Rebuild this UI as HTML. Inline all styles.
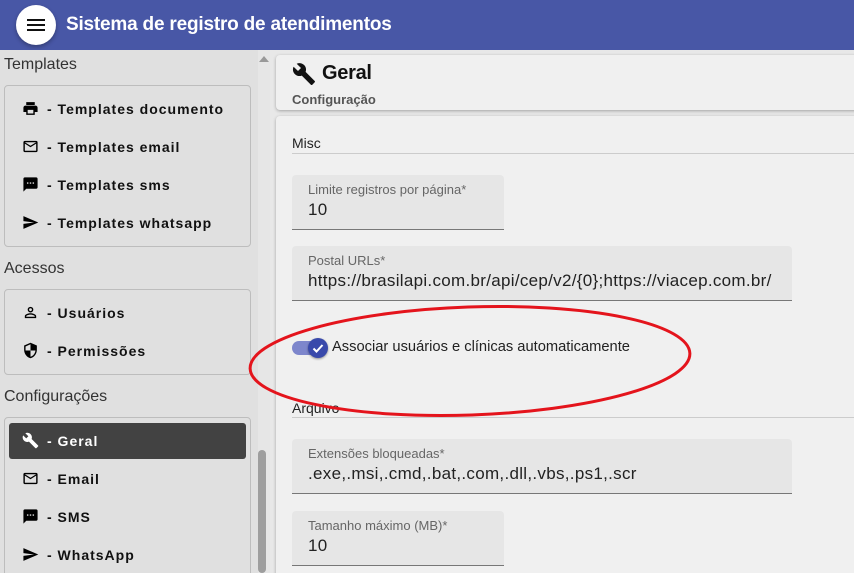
<!DOCTYPE html>
<html style="width:854px;height:573px;overflow:hidden"><head><style>
*{margin:0;padding:0;box-sizing:border-box}
body{width:854px;height:573px;overflow:hidden;background:#e8e8e8;font-family:"Liberation Sans",sans-serif;position:relative}
.hdr{position:absolute;left:0;top:0;width:854px;height:50px;background:#4857a6}
.menu{position:absolute;left:16px;top:5px;width:40px;height:40px;border-radius:50%;background:#fff;box-shadow:0 2px 4px rgba(0,0,0,.3)}
.menu i{position:absolute;left:11px;width:18px;height:2px;background:#111}
.title{position:absolute;left:66px;top:14px;color:#fff;font-size:19px;font-weight:bold;letter-spacing:-0.2px}
.side{position:absolute;left:0;top:50px;width:258px;height:523px;background:#e0e0e0}
.sb{position:absolute;left:258px;top:50px;width:12px;height:523px;background:#e6e6e6}
.thumb{position:absolute;left:258px;top:450px;width:8px;height:123px;background:#9e9e9e;border-radius:4px}
.sec{position:absolute;left:4px;font-size:16px;color:#333}
.box{position:absolute;left:4px;width:247px;border:1px solid #bdbdbd;border-radius:4px;background:#e0e0e0}
.it{position:absolute;left:22px;font-size:14px;font-weight:bold;letter-spacing:1px;color:#111;display:flex;align-items:center}
.it svg{width:17px;height:17px;margin-right:8px}
.act{position:absolute;left:9px;top:423px;width:237px;height:36px;background:#424242;border-radius:3px}
.card{position:absolute;left:276px;background:#f0f0f0;border-radius:4px;box-shadow:0 1px 3px rgba(0,0,0,.3)}
.fld{position:absolute;background:#e6e6e6;border-bottom:1px solid #777;border-radius:4px 4px 0 0}
.fld .l{position:absolute;left:16px;top:7px;font-size:13px;color:#666}
.fld .v{position:absolute;left:16px;top:25px;font-size:17px;letter-spacing:0.3px;color:#222}
</style></head><body>
<div class="hdr"><div class="menu"><i style="top:14px"></i><i style="top:19px"></i><i style="top:24px"></i></div><div class="title">Sistema de registro de atendimentos</div></div>
<div class="side"></div><div class="sb"></div><div class="thumb"></div>
<div style="position:absolute;left:259px;top:56px;width:0;height:0;border-left:5px solid transparent;border-right:5px solid transparent;border-bottom:6px solid #999"></div>
<div class="sec" style="top:56px">Templates</div>
<div class="box" style="top:85px;height:162px"></div>
<div class="it" style="top:100px"><svg viewBox="0 0 24 24"><path d="M19 8H5c-1.7 0-3 1.3-3 3v6h4v4h12v-4h4v-6c0-1.7-1.3-3-3-3zm-3 11H8v-5h8v5zM18 3H6v4h12z"/></svg>- Templates documento</div>
<div class="it" style="top:138px"><svg viewBox="0 0 24 24"><path d="M20 4H4c-1.1 0-2 .9-2 2v12c0 1.1.9 2 2 2h16c1.1 0 2-.9 2-2V6c0-1.1-.9-2-2-2zm0 14H4V8l8 5 8-5v10zm-8-7L4 6h16l-8 5z"/></svg>- Templates email</div>
<div class="it" style="top:176px"><svg viewBox="0 0 24 24"><path d="M20 2H4c-1.1 0-2 .9-2 2v18l4-4h14c1.1 0 2-.9 2-2V4c0-1.1-.9-2-2-2zM9 11H7V9h2v2zm4 0h-2V9h2v2zm4 0h-2V9h2v2z"/></svg>- Templates sms</div>
<div class="it" style="top:214px"><svg viewBox="0 0 24 24"><path d="M2 21l21-9L2 3v7l15 2-15 2z"/></svg>- Templates whatsapp</div>
<div class="sec" style="top:260px">Acessos</div>
<div class="box" style="top:289px;height:86px"></div>
<div class="it" style="top:304px"><svg viewBox="0 0 24 24"><path d="M12 6a2 2 0 1 1 0 4 2 2 0 0 1 0-4m0 9c2.7 0 5.8 1.3 6 2v1H6v-1c.2-.7 3.3-2 6-2m0-11a4 4 0 1 0 0 8 4 4 0 0 0 0-8zm0 9c-2.7 0-8 1.3-8 4v3h16v-3c0-2.7-5.3-4-8-4z"/></svg>- Usuários</div>
<div class="it" style="top:342px"><svg viewBox="0 0 24 24"><path d="M12 1L3 5v6c0 5.6 3.8 10.7 9 12 5.2-1.3 9-6.4 9-12V5l-9-4zm0 11h7c-.5 4.1-3.3 7.8-7 8.9V12H5V6.3l7-3.1V12z"/></svg>- Permissões</div>
<div class="sec" style="top:388px">Configurações</div>
<div class="box" style="top:417px;height:160px"></div>
<div class="act"></div>
<div class="it" style="top:432px;color:#fff"><svg viewBox="0 0 24 24" fill="#fff"><path d="M22.7 19l-9.1-9.1c.9-2.3.4-5-1.5-6.9-2-2-5-2.4-7.4-1.3L9 6 6 9 1.6 4.7C.4 7.1.9 10.1 2.9 12.1c1.9 1.9 4.6 2.4 6.9 1.5l9.1 9.1c.4.4 1 .4 1.4 0l2.3-2.3c.5-.4.5-1.1.1-1.4z"/></svg>- Geral</div>
<div class="it" style="top:470px"><svg viewBox="0 0 24 24"><path d="M20 4H4c-1.1 0-2 .9-2 2v12c0 1.1.9 2 2 2h16c1.1 0 2-.9 2-2V6c0-1.1-.9-2-2-2zm0 14H4V8l8 5 8-5v10zm-8-7L4 6h16l-8 5z"/></svg>- Email</div>
<div class="it" style="top:508px"><svg viewBox="0 0 24 24"><path d="M20 2H4c-1.1 0-2 .9-2 2v18l4-4h14c1.1 0 2-.9 2-2V4c0-1.1-.9-2-2-2zM9 11H7V9h2v2zm4 0h-2V9h2v2zm4 0h-2V9h2v2z"/></svg>- SMS</div>
<div class="it" style="top:546px"><svg viewBox="0 0 24 24"><path d="M2 21l21-9L2 3v7l15 2-15 2z"/></svg>- WhatsApp</div>

<div class="card" style="top:55px;width:590px;height:55px">
<svg style="position:absolute;left:16px;top:7px" width="24" height="24" viewBox="0 0 24 24"><path fill="#111" d="M22.7 19l-9.1-9.1c.9-2.3.4-5-1.5-6.9-2-2-5-2.4-7.4-1.3L9 6 6 9 1.6 4.7C.4 7.1.9 10.1 2.9 12.1c1.9 1.9 4.6 2.4 6.9 1.5l9.1 9.1c.4.4 1 .4 1.4 0l2.3-2.3c.5-.4.5-1.1.1-1.4z"/></svg>
<div style="position:absolute;left:46px;top:7px;font-size:20px;color:#111;font-weight:bold;letter-spacing:-0.3px">Geral</div>
<div style="position:absolute;left:16px;top:37px;font-size:13px;color:#555;font-weight:bold">Configuração</div>
</div>
<div class="card" style="top:116px;width:590px;height:470px">
<div style="position:absolute;left:16px;top:19px;font-size:14px;color:#222">Misc</div>
<div style="position:absolute;left:16px;top:37px;width:580px;height:1px;background:#ccc"></div>
<div style="position:absolute;left:16px;top:284px;font-size:14px;color:#222">Arquivo</div>
<div style="position:absolute;left:16px;top:301px;width:580px;height:1px;background:#ccc"></div>
</div>
<div class="fld" style="left:292px;top:175px;width:212px;height:55px"><div class="l">Limite registros por página*</div><div class="v">10</div></div>
<div class="fld" style="left:292px;top:246px;width:500px;height:55px"><div class="l">Postal URLs*</div><div class="v">https://brasilapi.com.br/api/cep/v2/{0};https://viacep.com.br/</div></div>
<div style="position:absolute;left:292px;top:341px;width:34px;height:14px;border-radius:7px;background:#7d86cc"></div>
<div style="position:absolute;left:308px;top:338px;width:20px;height:20px;border-radius:50%;background:#3949ab;box-shadow:0 1px 2px rgba(0,0,0,.4)"><svg width="20" height="20" viewBox="0 0 20 20"><path d="M5.5 10.5l3 3 6-6.5" stroke="#fff" stroke-width="2" fill="none"/></svg></div>
<div style="position:absolute;left:332px;top:339px;font-size:14.7px;color:#222">Associar usuários e clínicas automaticamente</div>
<div class="fld" style="left:292px;top:439px;width:500px;height:55px"><div class="l">Extensões bloqueadas*</div><div class="v">.exe,.msi,.cmd,.bat,.com,.dll,.vbs,.ps1,.scr</div></div>
<div class="fld" style="left:292px;top:511px;width:212px;height:55px"><div class="l">Tamanho máximo (MB)*</div><div class="v">10</div></div>
<svg style="position:absolute;left:0;top:0" width="854" height="573"><ellipse cx="470" cy="361" rx="220" ry="54" transform="rotate(-2 470 361)" fill="none" stroke="#e4141c" stroke-width="3"/></svg>
</body></html>
